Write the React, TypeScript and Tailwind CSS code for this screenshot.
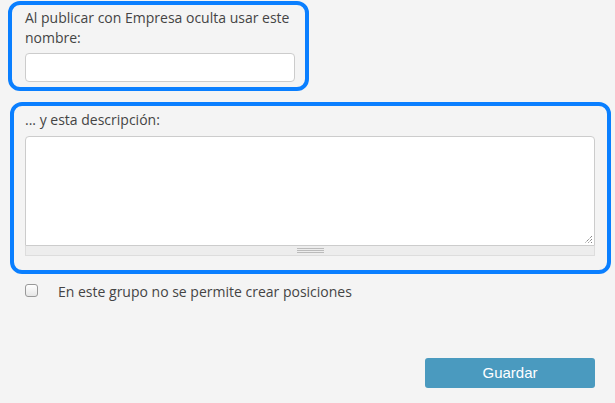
import React from "react";

export default function App() {
  return (
    <div className="w-[615px] h-[403px] bg-[#f4f4f4] text-[#444] relative overflow-hidden" style={{ fontFamily: '"Open Sans", sans-serif' }}>
      <div className="ml-[8px] mt-[1px] w-[301px] h-[90px] border-4 border-[#0a7fff] rounded-[12px] pl-[13px] pt-[3px]">
        <div className="text-[14px] leading-[20px] w-[270px]">Al publicar con Empresa oculta usar este nombre:</div>
        <div className="mt-[5px] w-[270px] h-[29px] bg-white border border-[#ccc] rounded-[4px]" />
      </div>
      <div className="ml-[10px] mt-[11px] w-[601px] h-[172px] border-4 border-[#0a7fff] rounded-[12px] pl-[11px] pt-[4px]">
        <div className="text-[14px] leading-[20px]">... y esta descripción:</div>
        <div className="mt-[6px] w-[570px]">
          <div className="relative h-[110px] bg-white border border-[#ccc] rounded-t-[4px]">
            <svg className="absolute right-[1px] bottom-[1px]" width="9" height="9" viewBox="0 0 9 9">
              <path d="M8 1 L1 8 M8 4 L4 8 M8 7 L7 8" stroke="#555" strokeWidth="1" strokeDasharray="1 1" />
            </svg>
          </div>
          <div className="h-[10px] bg-[#ededed] border border-t-0 border-[#ddd] flex flex-col items-center justify-center gap-[1px]">
            <div className="w-[27px] h-px bg-[#bbb]" />
            <div className="w-[27px] h-px bg-[#bbb]" />
            <div className="w-[27px] h-px bg-[#bbb]" />
          </div>
        </div>
      </div>
      <div className="flex items-start ml-[25px] mt-[7px]">
        <div className="mt-[3px] w-[13px] h-[13px] border border-[#999] rounded-[3px] bg-gradient-to-b from-[#fff] to-[#e6e6e6]" />
        <div className="ml-[20px] text-[14px] leading-[22px]">En este grupo no se permite crear posiciones</div>
      </div>
      <div className="flex justify-end pr-[20px] mt-[55px]">
        <button className="w-[170px] h-[30px] bg-[#4a9abf] text-white rounded-[3px] text-[15px]" style={{ fontFamily: '"Liberation Sans", Arial, sans-serif' }}>Guardar</button>
      </div>
    </div>
  );
}
